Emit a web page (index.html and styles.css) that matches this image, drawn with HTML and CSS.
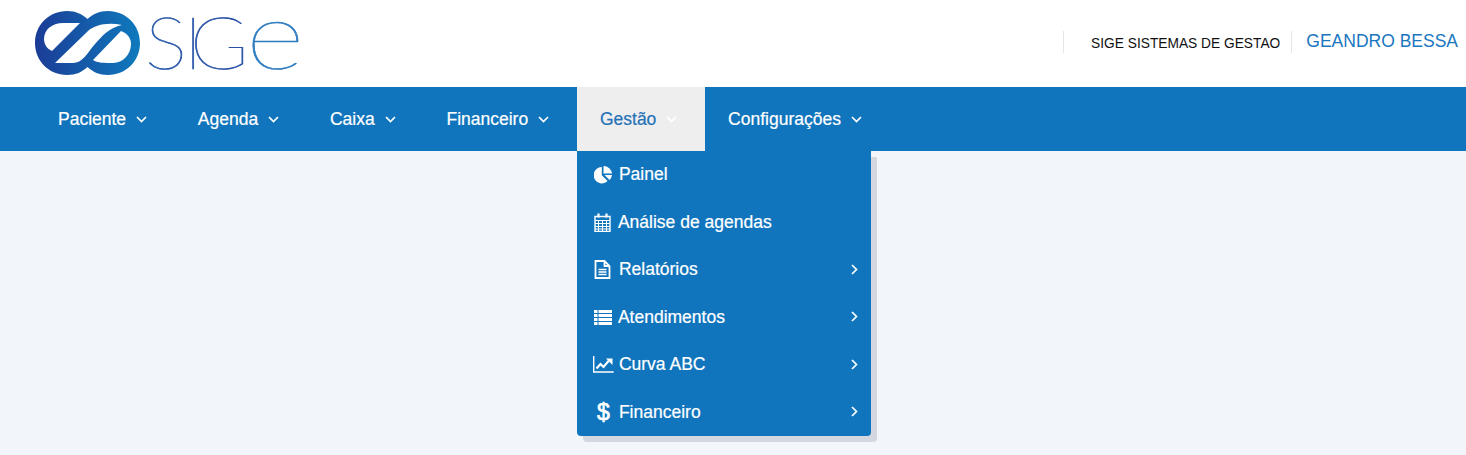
FILE: index.html
```html
<!DOCTYPE html>
<html lang="pt-BR">
<head>
<meta charset="utf-8">
<title>SIGE</title>
<link rel="stylesheet" href="styles.css">
</head>
<body>
<header class="topbar">
  <a class="logo" href="#" aria-label="SIGE">
    <svg class="logo-svg" width="270" height="64" viewBox="0 0 270 64">
      <defs>
        <linearGradient id="ring" x1="0" y1="0" x2="1" y2="0">
          <stop offset="0" stop-color="#1b3c96"/>
          <stop offset="1" stop-color="#0f7abd"/>
        </linearGradient>
        <linearGradient id="word" gradientUnits="userSpaceOnUse" x1="0" y1="0" x2="160" y2="0">
          <stop offset="0" stop-color="#2f62ad"/>
          <stop offset="0.5" stop-color="#2a4fa5"/>
          <stop offset="1" stop-color="#2f86c8"/>
        </linearGradient>
      </defs>
      <path fill="url(#ring)" d="M32 0C41 0 47 3 52.500 8C58 3 64 0 73 0C91 0 105 14 105 32C105 50 91 64 73 64C64 64 58 61 52.500 56C47 61 41 64 32 64C14 64 0 50 0 32C0 14 14 0 32 0Z"/>
      <path fill="#fff" d="M45 12L17 40C12 38 9 33 9 28C9 18 18 12 28 12Z"/>
      <path fill="#fff" d="M20 52L53 20C60 14 72 11 87 14C74 17 68 24 60 33C53 41 48 52 38 52Z"/>
      <path fill="#fff" d="M86 20L58 49C62 52 70 52 78 52C88 52 96 43 96 33C96 27 92 22 86 20Z"/>
      <text class="logo-word" transform="translate(110 57.500) scale(1.100 1)" x="0 35 41" y="0">SIG</text>
      <text class="logo-e" transform="translate(211 57.500) scale(1.200 1)">e</text>
    </svg>
  </a>
  <div class="account">
    <span class="company">SIGE SISTEMAS DE GESTAO</span>
    <a class="user" href="#">GEANDRO BESSA</a>
  </div>
</header>

<nav class="mainnav">
  <ul class="navlist">
    <li class="navitem"><a class="navlink" href="#">Paciente<svg class="chev" viewBox="0 0 11 7"><path d="M1 1l4.500 4.500L10 1"/></svg></a></li>
    <li class="navitem"><a class="navlink" href="#">Agenda<svg class="chev" viewBox="0 0 11 7"><path d="M1 1l4.500 4.500L10 1"/></svg></a></li>
    <li class="navitem"><a class="navlink" href="#">Caixa<svg class="chev" viewBox="0 0 11 7"><path d="M1 1l4.500 4.500L10 1"/></svg></a></li>
    <li class="navitem"><a class="navlink" href="#">Financeiro<svg class="chev" viewBox="0 0 11 7"><path d="M1 1l4.500 4.500L10 1"/></svg></a></li>
    <li class="navitem is-open">
      <a class="navlink" href="#">Gestão<svg class="chev" viewBox="0 0 11 7"><path d="M1 1l4.500 4.500L10 1"/></svg></a>
      <ul class="dropdown">
        <li><a class="dropitem" href="#">
          <span class="ico"><svg width="18" height="18" viewBox="0 0 18 18"><path class="solid" d="M7.800 1v8.200l5.800 5.800A8.200 8.200 0 1 1 7.800 1Z"/><path class="solid" d="M9.500 0A8.500 8.500 0 0 1 18 7.600H9.500Z"/><path class="solid" d="M10.500 9H18A8.300 8.300 0 0 1 15.500 14Z"/></svg></span>
          <span class="label">Painel</span></a></li>
        <li><a class="dropitem tight" href="#">
          <span class="ico"><svg width="17" height="19" viewBox="0 0 17 19"><path class="line med" d="M1 3.500h15v15h-15z"/><path class="line" d="M1 7.500h15M1 10.500h15M1 13.500h15M1 16h15M4.500 7.500v11M8.500 7.500v11M12.500 7.500v11"/><path class="line thick" d="M4.500 0.500v4M12.500 0.500v4"/></svg></span>
          <span class="label">Análise de agendas</span></a></li>
        <li><a class="dropitem has-sub" href="#">
          <span class="ico"><svg width="17" height="19" viewBox="0 0 17 19"><path class="line wide" d="M1.500 1h9l5 5v12h-14zM10.500 1v5h5"/><path class="line med" d="M4.500 9.500h8M4.500 12h8M4.500 14.500h8"/></svg></span>
          <span class="label">Relatórios</span>
          <svg class="chev-r" viewBox="0 0 7 11"><path d="M1 1l4.500 4.500L1 10"/></svg></a></li>
        <li><a class="dropitem has-sub tight" href="#">
          <span class="ico"><svg width="18" height="15" viewBox="0 0 18 15"><path class="solid" d="M0 0h3.500v3H0zM4.500 0H18v3H4.500zM0 4h3.500v3H0zM4.500 4H18v3H4.500zM0 8h3.500v3H0zM4.500 8H18v3H4.500zM0 12h3.500v3H0zM4.500 12H18v3H4.500z"/></svg></span>
          <span class="label">Atendimentos</span>
          <svg class="chev-r" viewBox="0 0 7 11"><path d="M1 1l4.500 4.500L1 10"/></svg></a></li>
        <li><a class="dropitem has-sub" href="#">
          <span class="ico"><svg class="chart" width="21" height="17" viewBox="0 0 21 17"><path class="line med" d="M0.700 0v16h20"/><path class="line thick" d="M3.500 12.500l4-4.500 3 3 5.500-6.500"/><path class="solid" d="M13 2.500H19.500V9Z"/></svg></span>
          <span class="label">Curva ABC</span>
          <svg class="chev-r" viewBox="0 0 7 11"><path d="M1 1l4.500 4.500L1 10"/></svg></a></li>
        <li><a class="dropitem has-sub" href="#">
          <span class="ico dollar">$</span>
          <span class="label">Financeiro</span>
          <svg class="chev-r" viewBox="0 0 7 11"><path d="M1 1l4.500 4.500L1 10"/></svg></a></li>
      </ul>
    </li>
    <li class="navitem"><a class="navlink" href="#">Configurações<svg class="chev" viewBox="0 0 11 7"><path d="M1 1l4.500 4.500L10 1"/></svg></a></li>
  </ul>
</nav>
</body>
</html>
```
FILE: styles.css
```css
* { box-sizing: border-box; }
html, body { margin: 0; padding: 0; }
body {
  background: #f2f5fa;
  font-family: "Liberation Sans", Arial, sans-serif;
  color: #fff;
  height: 455px;
  overflow: hidden;
}
a { text-decoration: none; color: inherit; }
ul { list-style: none; margin: 0; padding: 0; }

.topbar {
  height: 87px;
  background: #fff;
  display: flex;
  justify-content: space-between;
  align-items: center;
  padding: 0 8px 0 35px;
}
.logo { display: block; height: 64px; margin-top: -1px; }
.logo-svg { display: block; overflow: visible; }
.logo-word {
  font-family: Lato, sans-serif;
  font-weight: 100;
  font-size: 72px;
  fill: url(#word);
  stroke: url(#word);
  stroke-width: 0.700;
}
.logo-e {
  font-family: Lato, sans-serif;
  font-weight: 100;
  font-size: 94px;
  fill: #2f7cc0;
  stroke: #2f7cc0;
  stroke-width: 0.700;
}
.account { display: flex; align-items: center; height: 22px; margin-top: -3px; }
.company {
  border-left: 1px solid #e6e6e6;
  height: 22px;
  line-height: 25px;
  padding: 0 11px 0 27px;
  font-size: 13.750px;
  color: #111;
}
.user {
  border-left: 1px solid #e6e6e6;
  height: 22px;
  line-height: 20px;
  padding-left: 14px;
  font-size: 17.500px;
  color: #1a76bf;
}

.mainnav { height: 64px; background: #1075bd; padding-left: 35px; }
.navlist { display: flex; height: 64px; }
.navitem { position: relative; }
.navlink {
  display: flex;
  align-items: center;
  height: 64px;
  padding: 0 27.750px 0 23px;
  font-size: 17.500px;
  color: #fff;
  -webkit-text-stroke: 0.200px currentColor;
}
.chev { width: 11px; height: 7px; margin-left: 10px; flex: none; }
.chev path, .chev-r path { fill: none; stroke: #fff; stroke-width: 1.700; }
.is-open .navlink { background: #eee; color: #2472b8; }

.dropdown {
  position: absolute;
  left: 0;
  top: 100%;
  width: 294px;
  background: #1075bd;
  border-radius: 0 0 4px 4px;
  box-shadow: 6px 6px 0 #d3d7df;
  display: grid;
  grid-auto-rows: 47.500px;
}
.dropitem {
  display: flex;
  align-items: center;
  height: 100%;
  padding: 0 13px 0.500px 17px;
  font-size: 17.500px;
  color: #fff;
  -webkit-text-stroke: 0.200px currentColor;
}
.ico { width: 25px; display: flex; justify-content: flex-start; align-items: center; flex: none; }
.tight .ico { width: 24px; }
.ico svg { display: block; }
.ico .chart { margin-left: -1px; }
.dollar {
  font-size: 23px;
  line-height: 24px;
  padding-left: 3px;
  -webkit-text-stroke: 0.700px currentColor;
}
.label { flex: 1; }
.chev-r { width: 7px; height: 11px; flex: none; margin-top: -1px; }
.solid { fill: #fff; }
.line { fill: none; stroke: #fff; stroke-width: 1; }
.med { stroke-width: 1.400; }
.wide { stroke-width: 1.800; }
.thick { stroke-width: 2.200; }
```
